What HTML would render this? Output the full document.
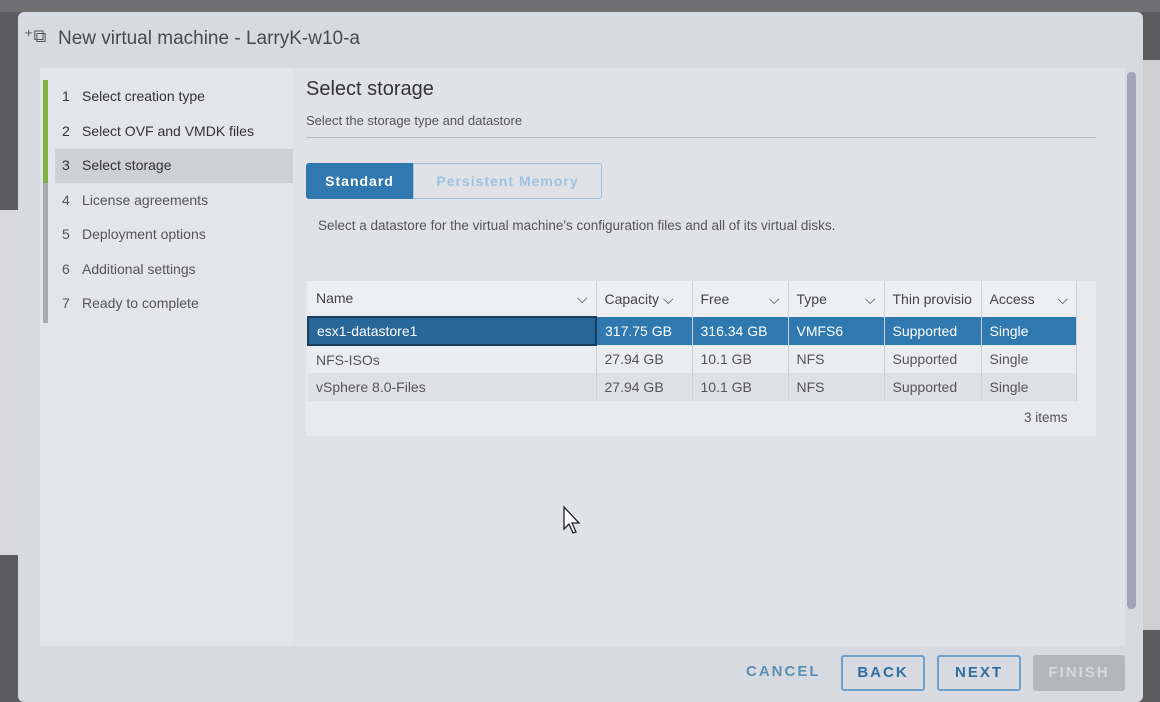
<!DOCTYPE html>
<html><head><meta charset="utf-8"><style>
*{margin:0;padding:0;box-sizing:border-box}
body{width:1160px;height:694px;overflow:hidden;position:relative;background:#5c5c5e;font-family:"Liberation Sans",sans-serif;color:#333}
.abs{position:absolute}
.modal{left:18px;top:12px;width:1125px;height:690px;background:#d8dae1;border-radius:6px}
.nav{left:40px;top:68px;width:253px;height:578px;background:#e4e5eb}
.step{position:absolute;left:22px;font-size:14px;color:#555}
.step b{display:inline-block;width:20px;font-weight:normal}
.content{left:293px;top:68px;width:832px;height:578px;background:#e1e2e8}
table{border-collapse:collapse;font-size:14px}
td{height:28px;padding-left:8px;border-right:1px solid #d0d1d6;color:#555}
.hd td{height:36px;color:#444;background:#eeeff3}
.btn{position:absolute;top:655px;height:36px;border:2px solid #6ea0c8;border-radius:3px;color:#2f6f9f;font-weight:bold;font-size:15px;letter-spacing:2px;text-align:center;line-height:32px}
</style></head><body>
<div class="abs" style="left:0;top:210px;width:18px;height:345px;background:#d9d9db"></div>
<div class="abs" style="left:1143px;top:60px;width:17px;height:570px;background:#cfcfd2"></div>
<div class="abs" style="left:0;top:0;width:1160px;height:12px;background:#707072"></div>
<div class="abs modal"></div>
<div class="abs" style="left:24px;top:26px;font-size:18px;color:#555">⁺⧉</div>
<div class="abs" style="left:58px;top:28px;font-size:19px;color:#4a4a4a">New virtual machine - LarryK-w10-a</div>
<div class="abs nav">
 <div class="abs" style="left:3px;top:12px;width:5px;height:103px;background:#7cb342"></div>
 <div class="abs" style="left:3px;top:115px;width:5px;height:140px;background:#aaabb0"></div>
 <div class="abs" style="left:15px;top:81px;width:238px;height:34px;background:#cfd0d6"></div>
 <div class="step" style="top:20px;color:#333"><b>1</b>Select creation type</div>
 <div class="step" style="top:55px;color:#333"><b>2</b>Select OVF and VMDK files</div>
 <div class="step" style="top:89px;color:#333"><b>3</b>Select storage</div>
 <div class="step" style="top:124px"><b>4</b>License agreements</div>
 <div class="step" style="top:158px"><b>5</b>Deployment options</div>
 <div class="step" style="top:193px"><b>6</b>Additional settings</div>
 <div class="step" style="top:227px"><b>7</b>Ready to complete</div>
</div>
<div class="abs content">
 <div class="abs" style="left:13px;top:10px;font-size:20px;color:#333">Select storage</div>
 <div class="abs" style="left:13px;top:45px;font-size:13px;color:#555">Select the storage type and datastore</div>
 <div class="abs" style="left:13px;top:69px;width:790px;height:1px;background:#b8b9c0"></div>
 <div class="abs" style="left:13px;top:95px;width:107px;height:36px;background:#2f79b0;border-radius:3px 0 0 3px;color:#fff;font-weight:bold;font-size:14px;letter-spacing:1px;line-height:36px;text-align:center">Standard</div>
 <div class="abs" style="left:120px;top:95px;width:189px;height:36px;border:1px solid #9cc3e0;border-radius:0 3px 3px 0;color:#9cc3e0;font-weight:bold;font-size:14px;letter-spacing:1px;line-height:34px;text-align:center">Persistent Memory</div>
 <div class="abs" style="left:25px;top:150px;font-size:13.5px;color:#555">Select a datastore for the virtual machine's configuration files and all of its virtual disks.</div>
 <div class="abs" style="left:13px;top:213px;width:790px;height:155px;background:#e9eaee"></div>
 <table class="abs" style="left:14px;top:213px;width:770px">
  <tr class="hd"><td style="width:288px">Name <span style="float:right;margin-right:8px">⌵</span></td><td style="width:96px">Capacity ⌵</td><td style="width:96px">Free<span style="float:right;margin-right:8px">⌵</span></td><td style="width:96px">Type<span style="float:right;margin-right:8px">⌵</span></td><td style="width:97px">Thin provisio</td><td>Access<span style="float:right;margin-right:8px">⌵</span></td></tr>
  <tr style="background:#2f79b0"><td style="color:#fff;background:#27679a;border:2px solid #1b3d5c">esx1-datastore1</td><td style="color:#fff">317.75 GB</td><td style="color:#fff">316.34 GB</td><td style="color:#fff">VMFS6</td><td style="color:#fff">Supported</td><td style="color:#fff">Single</td></tr>
  <tr style="background:#ebecf0"><td>NFS-ISOs</td><td>27.94 GB</td><td>10.1 GB</td><td>NFS</td><td>Supported</td><td>Single</td></tr>
  <tr style="background:#dfe0e5"><td>vSphere 8.0-Files</td><td>27.94 GB</td><td>10.1 GB</td><td>NFS</td><td>Supported</td><td>Single</td></tr>
 </table>
 <div class="abs" style="left:731px;top:342px;font-size:13.5px;color:#555">3 items</div>
</div>
<div class="abs" style="left:1127px;top:72px;width:9px;height:537px;background:#a2a4b8;border-radius:4px"></div>
<div class="abs" style="left:746px;top:663px;font-size:15px;font-weight:bold;letter-spacing:2px;color:#5b8fb5">CANCEL</div>
<div class="btn" style="left:841px;width:84px">BACK</div>
<div class="btn" style="left:937px;width:84px">NEXT</div>
<div class="abs" style="left:1033px;top:655px;width:92px;height:36px;background:#b5b6bb;border-radius:3px;color:#d8d9dd;font-weight:bold;font-size:15px;letter-spacing:2px;text-align:center;line-height:36px">FINISH</div>
<svg class="abs" style="left:562px;top:505px" width="22" height="32"><path d="M2 2 L2 24 L7 19 L11 28 L14 27 L10 18 L17 18 Z" fill="#fff" stroke="#222" stroke-width="1.3"/></svg>
</body></html>
